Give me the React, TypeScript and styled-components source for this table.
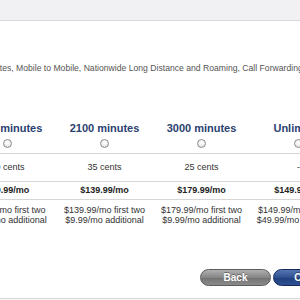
import React from "react";
import styled, { createGlobalStyle } from "styled-components";

const GlobalStyle = createGlobalStyle`
  html, body {
    margin: 0;
    padding: 0;
    background: #ffffff;
    overflow: hidden;
  }
  body {
    font-family: "Liberation Sans", Arial, sans-serif;
    color: #333333;
  }
`;

const Page = styled.div`
  width: 300px;
  height: 300px;
  overflow: hidden;
  display: flex;
  flex-direction: column;
`;

const TopBar = styled.div`
  height: 20px;
  flex-shrink: 0;
  background: #f1f1f3;
  border-bottom: 1px solid #d9d9dc;
`;

const Main = styled.div`
  margin-left: -41px;
  width: 388px;
  flex-shrink: 0;
`;

const Description = styled.p`
  margin: 42px 0 0 -11.5px;
  font-size: 8.65px;
  line-height: 11px;
  color: #555555;
  white-space: nowrap;
`;

const Header = styled.div`
  display: grid;
  grid-template-columns: repeat(4, 97px);
  padding: 48px 0 5px;
`;

const PlanHead = styled.label`
  display: flex;
  flex-direction: column;
  align-items: center;
`;

const PlanName = styled.span`
  font-size: 11px;
  line-height: 13px;
  font-weight: bold;
  color: #2b4170;
  white-space: nowrap;
`;

const Radio = styled.span`
  margin-top: 4px;
  width: 9px;
  height: 9px;
  box-sizing: border-box;
  border-radius: 50%;
  border: 1px solid #8c8c8c;
  background: radial-gradient(circle at 50% 35%, #ffffff 0%, #f2f2f2 45%, #d4d4d4 100%);
`;

const Row = styled.div<{ $pad: string; $bold?: boolean; $lh?: number }>`
  display: grid;
  grid-template-columns: repeat(4, 97px);
  border-top: 1px solid #d6d6d6;
  padding: ${(p) => p.$pad};
  font-size: 9px;
  line-height: ${(p) => p.$lh ?? 11}px;
  font-weight: ${(p) => (p.$bold ? "bold" : "normal")};
  color: ${(p) => (p.$bold ? "#222222" : "#333333")};
`;

const Cell = styled.div`
  text-align: center;
  white-space: nowrap;
`;

const ButtonBar = styled.div`
  display: flex;
  gap: 2px;
  margin-top: 44px;
  padding-left: 241px;
`;

const PillButton = styled.button<{ $primary?: boolean }>`
  flex-shrink: 0;
  height: 17px;
  width: ${(p) => (p.$primary ? "86px" : "71px")};
  padding: 0;
  border-radius: 9px;
  border: 1px solid ${(p) => (p.$primary ? "#142a5c" : "#5c5c5c")};
  background: ${(p) =>
    p.$primary
      ? "linear-gradient(#5677b4 0%, #2f4f8f 50%, #203f7d 51%, #2d4f91 100%)"
      : "linear-gradient(#b0b0b0 0%, #868686 50%, #727272 51%, #8a8a8a 100%)"};
  color: #ffffff;
  font-family: "Liberation Sans", Arial, sans-serif;
  font-size: 10px;
  font-weight: bold;
  text-shadow: 0 -1px 0 rgba(0, 0, 0, 0.35);
  cursor: pointer;
`;

const Footer = styled.div`
  margin-top: 12px;
  flex: 1;
  border-top: 1px solid #dcdcdc;
  background: #f4f4f5;
`;

const plans = [
  { name: "1000 minutes", cents: "40 cents", price: "$99.99/mo", family: "$99.99/mo first two", extra: "$9.99/mo additional" },
  { name: "2100 minutes", cents: "35 cents", price: "$139.99/mo", family: "$139.99/mo first two", extra: "$9.99/mo additional" },
  { name: "3000 minutes", cents: "25 cents", price: "$179.99/mo", family: "$179.99/mo first two", extra: "$9.99/mo additional" },
  { name: "Unlimited", cents: "-", price: "$149.99/mo", family: "$149.99/mo first two", extra: "$49.99/mo additional" },
];

export default function App() {
  return (
    <Page>
      <GlobalStyle />
      <TopBar />
      <Main>
        <Description>
          Anytime Minutes, Mobile to Mobile, Nationwide Long Distance and Roaming, Call Forwarding
        </Description>
        <Header>
          {plans.map((p) => (
            <PlanHead key={p.name}>
              <PlanName>{p.name}</PlanName>
              <Radio />
            </PlanHead>
          ))}
        </Header>
        <Row $pad="8px 0">
          {plans.map((p) => (
            <Cell key={p.name}>{p.cents}</Cell>
          ))}
        </Row>
        <Row $pad="3px 0" $bold>
          {plans.map((p) => (
            <Cell key={p.name}>{p.price}</Cell>
          ))}
        </Row>
        <Row $pad="5px 0 0" $lh={10}>
          {plans.map((p) => (
            <Cell key={p.name}>
              {p.family}
              <br />
              {p.extra}
            </Cell>
          ))}
        </Row>
        <ButtonBar>
          <PillButton>Back</PillButton>
          <PillButton $primary>Continue</PillButton>
        </ButtonBar>
      </Main>
      <Footer />
    </Page>
  );
}
